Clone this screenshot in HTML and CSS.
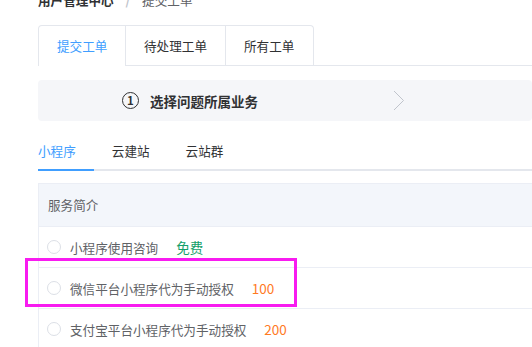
FILE: index.html
```html
<!DOCTYPE html>
<html lang="zh-CN">
<head>
    <meta charset="UTF-8">
    <meta name="viewport" content="width=device-width, initial-scale=1.0">
    <title>提交工单 - 用户管理中心</title>
    <link rel="stylesheet" href="styles.css">
</head>
<body>
    <div class="page">
        <div class="breadcrumb">
            <span class="crumb-home">用户管理中心</span>
            <span class="crumb-sep">/</span>
            <span class="crumb-current">提交工单</span>
        </div>

        <div class="card-tabs">
            <div class="card-tab-list">
                <div class="card-tab active">提交工单</div>
                <div class="card-tab">待处理工单</div>
                <div class="card-tab">所有工单</div>
            </div>
        </div>

        <div class="steps">
            <div class="step">
                <span class="step-icon">1</span>
                <span class="step-title">选择问题所属业务</span>
            </div>
            <svg class="step-arrow" width="12" height="21" viewBox="0 0 12 21">
                <path d="M1 1 L10.5 10.5 L1 20" fill="none" stroke="#c0c4cc" stroke-width="1"/>
            </svg>
        </div>

        <div class="line-tabs">
            <div class="line-tab active">小程序</div>
            <div class="line-tab">云建站</div>
            <div class="line-tab">云站群</div>
        </div>

        <div class="service-table">
            <div class="table-head">服务简介</div>
            <div class="table-row">
                <span class="radio"></span>
                <span class="service-name">小程序使用咨询</span>
                <span class="price free">免费</span>
            </div>
            <div class="table-row">
                <span class="radio"></span>
                <span class="service-name">微信平台小程序代为手动授权</span>
                <span class="price">100</span>
            </div>
            <div class="table-row">
                <span class="radio"></span>
                <span class="service-name">支付宝平台小程序代为手动授权</span>
                <span class="price">200</span>
            </div>
        </div>
    </div>
    <div class="highlight"></div>
</body>
</html>
```

FILE: styles.css
```css
body {
    margin: 0;
    padding: 0;
    background: #fff;
    color: #303133;
    font-family: "Noto Sans CJK SC", "Noto Sans", sans-serif;
    font-size: 12.6px;
    overflow: hidden;
}

.page {
    padding-left: 38px;
}

.breadcrumb {
    margin-top: -8px;
    height: 16px;
    line-height: 16px;
    white-space: nowrap;
}

.crumb-home {
    font-weight: bold;
    color: #303133;
}

.crumb-sep {
    margin: 0 9px;
    color: #c0c4cc;
    font-weight: bold;
}

.crumb-current {
    color: #606266;
}

.card-tabs {
    margin-top: 17px;
    display: flex;
    border-bottom: 1px solid #e4e7ed;
}

.card-tab-list {
    display: flex;
    border: 1px solid #e4e7ed;
    border-bottom: none;
    border-radius: 4px 4px 0 0;
    margin-bottom: -1px;
}

.card-tab {
    box-sizing: border-box;
    height: 40px;
    line-height: 39px;
    padding: 0 18px;
    white-space: nowrap;
    color: #303133;
    border-left: 1px solid #e4e7ed;
    border-bottom: 1px solid #e4e7ed;
}

.card-tab:first-child {
    border-left: none;
    width: 86px;
}

.card-tab:nth-child(2) {
    width: 100px;
}

.card-tab:nth-child(3) {
    width: 88px;
}

.card-tab.active {
    color: #409eff;
    border-bottom-color: #fff;
}

.steps {
    margin-top: 14px;
    height: 41px;
    background: #f5f6f9;
    border-radius: 4px;
    display: flex;
    align-items: center;
    padding-left: 84px;
}

.step {
    display: flex;
    align-items: center;
    width: 271px;
}

.step-icon {
    box-sizing: border-box;
    width: 17px;
    height: 17px;
    border: 1px solid #303133;
    border-radius: 50%;
    font-size: 11.5px;
    font-weight: bold;
    line-height: 15px;
    text-align: center;
    margin-right: 11px;
}

.step-title {
    font-size: 13.5px;
    font-weight: bold;
    color: #303133;
}

.step-arrow {
    display: block;
}

.line-tabs {
    margin-top: 10px;
    display: flex;
    border-bottom: 2px solid #e4e7ed;
}

.line-tab {
    height: 38px;
    line-height: 40px;
    padding: 0 18px;
    color: #303133;
    margin-bottom: -2px;
    border-bottom: 2px solid transparent;
}

.line-tab:first-child {
    padding-left: 0;
}

.line-tab.active {
    color: #409eff;
    border-bottom-color: #409eff;
}

.line-tab.active + .line-tab {
    padding-left: 18px;
}

.service-table {
    margin-top: 12px;
    border: 1px solid #ebeef5;
    border-right: none;
}

.table-head {
    height: 42px;
    line-height: 42px;
    padding-left: 9px;
    background: #f3f6fb;
    color: #606266;
    border-bottom: 1px solid #ebeef5;
}

.table-row {
    height: 40px;
    display: flex;
    align-items: center;
    padding-left: 8px;
    border-bottom: 1px solid #ebeef5;
    color: #606266;
}

.radio {
    box-sizing: border-box;
    width: 14px;
    height: 14px;
    border: 1px solid #dcdfe6;
    border-radius: 50%;
    margin-right: 9px;
}

.price {
    margin-left: 18px;
    font-size: 13.5px;
    color: #ff7a1f;
}

.price.free {
    color: #15a06b;
}

.highlight {
    position: absolute;
    left: 25px;
    top: 258px;
    width: 272px;
    height: 49px;
    box-sizing: border-box;
    border: 3px solid #f81bf0;
}
```
